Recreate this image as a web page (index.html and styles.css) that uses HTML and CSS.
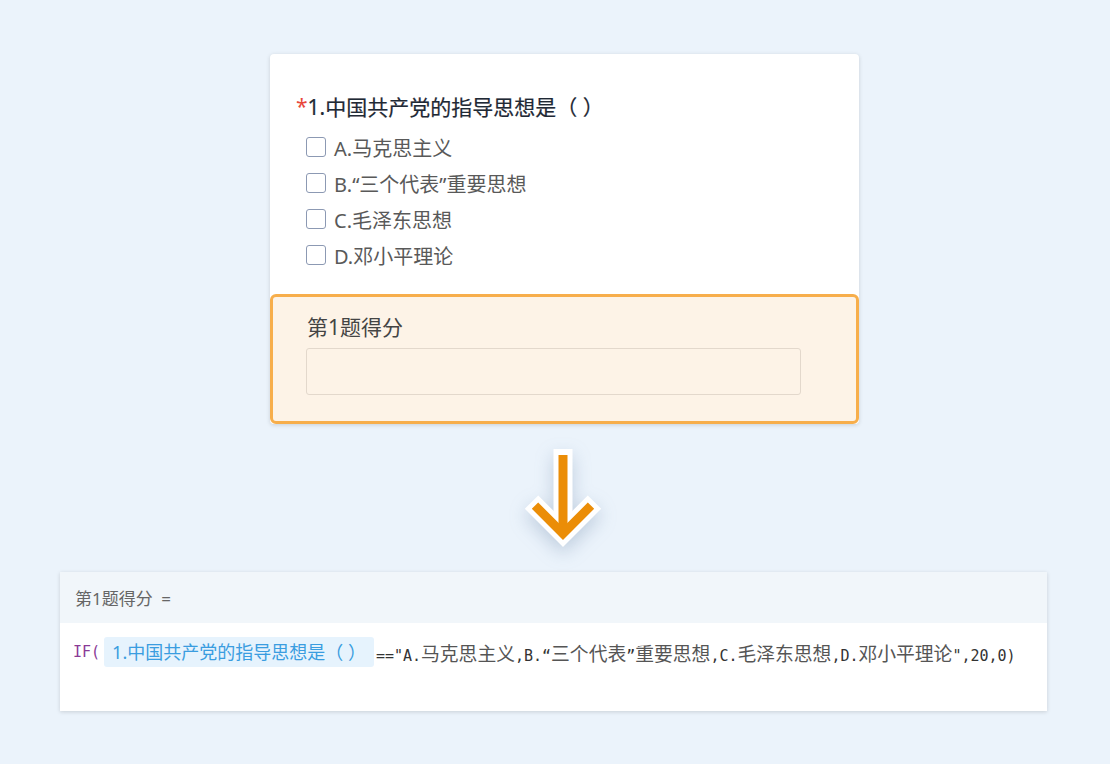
FILE: index.html
```html
<!DOCTYPE html>
<html lang="zh-CN">
<head>
    <meta charset="UTF-8">
    <meta name="viewport" content="width=device-width, initial-scale=1.0">
    <title>题目得分公式</title>
    <link rel="stylesheet" href="styles.css">
</head>
<body>
    <div class="page">
        <div class="question-card">
            <div class="question-title"><span class="required">*</span>1.中国共产党的指导思想是（ ）</div>
            <ul class="options">
                <li class="option"><span class="checkbox"></span>A.马克思主义</li>
                <li class="option"><span class="checkbox"></span>B.“三个代表”重要思想</li>
                <li class="option"><span class="checkbox"></span>C.毛泽东思想</li>
                <li class="option"><span class="checkbox"></span>D.邓小平理论</li>
            </ul>
            <div class="score-field">
                <div class="score-label">第1题得分</div>
                <div class="score-input"></div>
            </div>
        </div>

        <div class="arrow">
            <svg width="100" height="100" viewBox="0 0 100 100">
                <g fill="none" stroke="#ffffff" stroke-width="19" stroke-linejoin="miter">
                    <path d="M50 1 L50 84"/>
                    <path d="M18.5 54.1 L50 85.6 L81.5 54.1"/>
                </g>
                <g fill="none" stroke="#eb8d07" stroke-width="9" stroke-linejoin="miter">
                    <path d="M50 7 L50 84"/>
                    <path d="M22 57.6 L50 85.6 L78 57.6"/>
                </g>
            </svg>
        </div>

        <div class="formula-card">
            <div class="formula-head">第1题得分 =</div>
            <div class="formula-body">
                <span class="fn">IF(</span><span class="field-chip">1.中国共产党的指导思想是（ ）</span><span class="code">=="A.<span class="cjk">马克思主义</span>,B.“<span class="cjk">三个代表</span>”<span class="cjk">重要思想</span>,C.<span class="cjk">毛泽东思想</span>,D.<span class="cjk">邓小平理论</span>",20,0)</span>
            </div>
        </div>
    </div>
</body>
</html>
```

FILE: styles.css
```css
* {
    margin: 0;
    padding: 0;
    box-sizing: border-box;
}

body {
    font-family: "Noto Sans", "Noto Sans CJK SC", sans-serif;
    background-color: #ebf3fb;
    width: 1110px;
    height: 764px;
    overflow: hidden;
    text-spacing-trim: space-all;
}

.page {
    display: flex;
    flex-direction: column;
    padding-top: 54px;
}

/* question card */
.question-card {
    width: 589px;
    margin-left: 270px;
    background-color: #fff;
    border-radius: 4px;
    box-shadow: 0 1px 4px rgba(0, 0, 0, 0.15);
    padding-top: 38px;
}

.question-title {
    display: flex;
    align-items: center;
    height: 28px;
    font-size: 21px;
    color: #1f2935;
    -webkit-text-stroke: 0.2px #1f2935;
    padding-left: 26px;
}

.required {
    color: #e8473b;
    -webkit-text-stroke: 0;
}

.options {
    list-style: none;
    margin-top: 9px;
    padding-left: 36px;
    margin-bottom: 21px;
}

.option {
    display: flex;
    align-items: center;
    gap: 8px;
    height: 36px;
    font-size: 20px;
    color: #595959;
}

.checkbox {
    width: 20px;
    height: 20px;
    border: 1px solid #8c99b3;
    border-radius: 3px;
    background-color: #fff;
}

.score-field {
    border: 3px solid #f7ae4b;
    border-radius: 6px;
    background-color: #fdf3e7;
    padding: 17px 55px 26px 33px;
}

.score-label {
    height: 24px;
    display: flex;
    align-items: center;
    font-size: 21px;
    color: #444;
    padding-left: 1px;
}

.score-input {
    margin-top: 10px;
    height: 47px;
    border: 1px solid #e3d8cc;
    border-radius: 3px;
}

/* arrow */
.arrow {
    display: flex;
    justify-content: center;
    margin: 24px 0 0 463px;
    width: 200px;
    height: 100px;
    filter: drop-shadow(0 7px 9px rgba(90, 120, 160, 0.3));
}

/* formula card */
.formula-card {
    width: 987px;
    margin-left: 60px;
    margin-top: 24px;
    background-color: #fff;
    box-shadow: 0 1px 4px rgba(0, 0, 0, 0.15);
    height: 139px;
}

.formula-head {
    height: 51px;
    background-color: #f1f6fa;
    padding-left: 15px;
    display: flex;
    align-items: center;
    font-size: 17px;
    color: #666;
    word-spacing: 4px;
}

.formula-body {
    display: flex;
    align-items: center;
    padding: 14px 0 0 13px;
    white-space: nowrap;
}

.fn {
    font-family: "DejaVu Sans Mono", "Noto Sans CJK SC", monospace;
    font-size: 15px;
    color: #8a3a96;
}

.field-chip {
    background-color: #e6f3fd;
    color: #3a9de0;
    font-size: 18px;
    height: 30px;
    line-height: 30px;
    padding: 0 8px;
    border-radius: 3px;
    margin: 0 2px 0 4px;
}

.code {
    font-family: "DejaVu Sans Mono", "Noto Sans CJK SC", monospace;
    font-size: 15px;
    color: #333;
}

.cjk {
    font-family: "Noto Sans CJK SC", sans-serif;
    font-size: 18.8px;
    color: #555;
}
```
